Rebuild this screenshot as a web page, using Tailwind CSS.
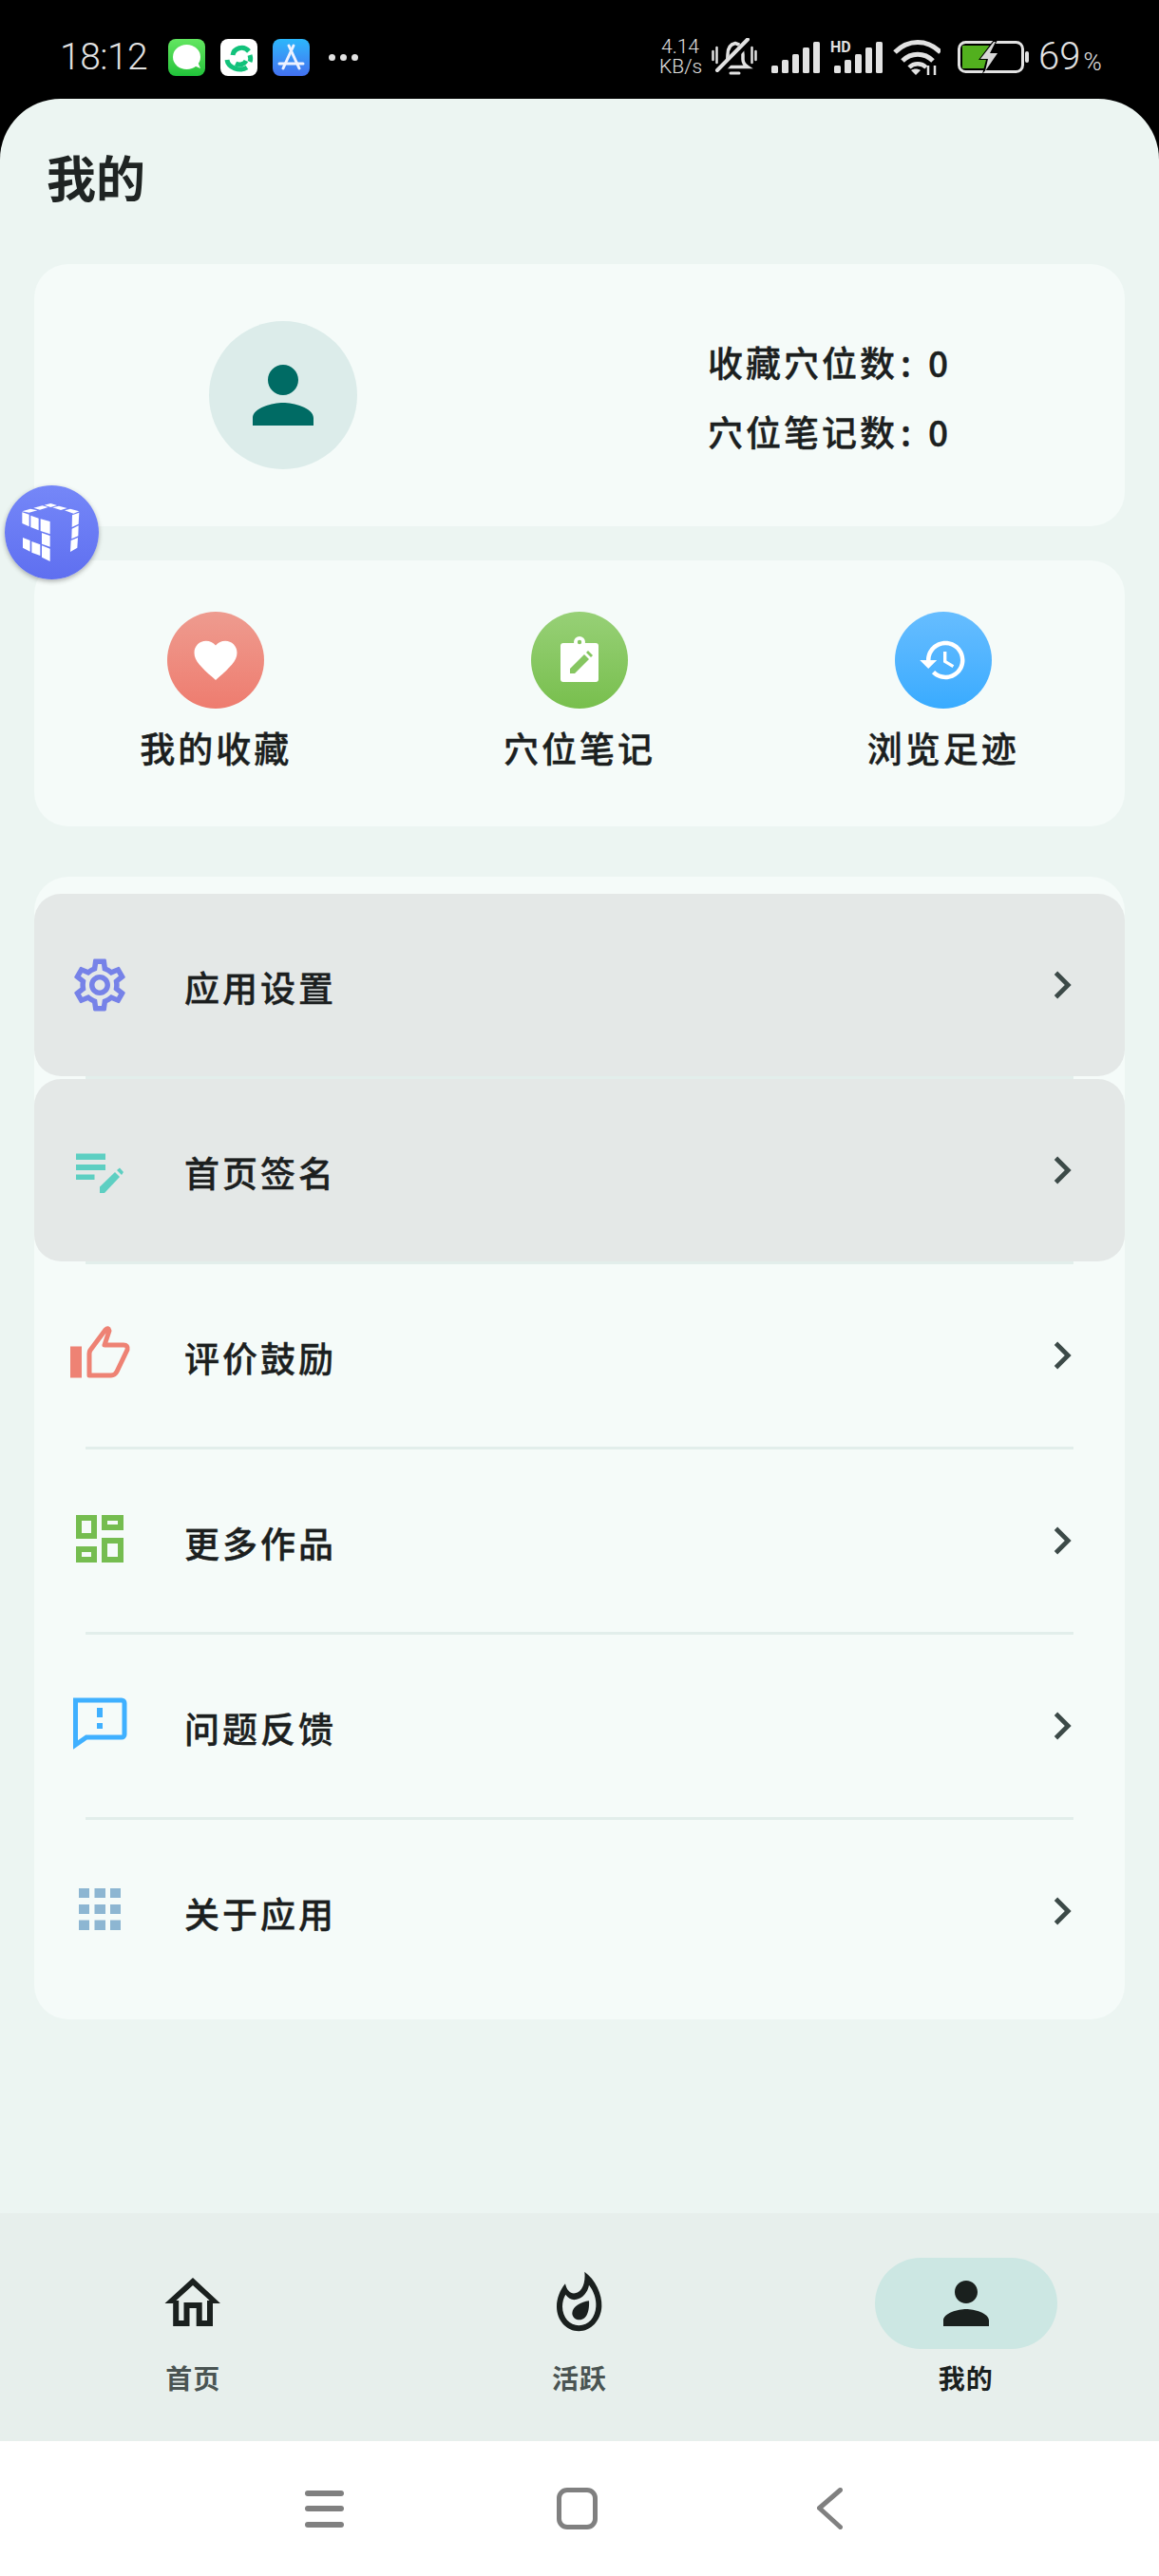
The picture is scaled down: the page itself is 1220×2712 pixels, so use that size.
<!DOCTYPE html>
<html lang="zh-CN">

<head>
  <meta charset="UTF-8">
  <meta name="viewport" content="width=device-width, initial-scale=1.0">
  <title>我的</title>
  <script src="https://cdn.jsdelivr.net/npm/@tailwindcss/browser@4"></script>
</head>

<body class="bg-black">
  <div class="relative w-[1220px] h-[2712px] flex flex-col bg-black overflow-hidden font-['Noto_Sans_CJK_SC',sans-serif] text-[#1c1f1f]">

    <!-- status bar -->
    <div class="h-[104px] shrink-0 flex items-center pt-[16px] pl-[63px] text-[#e2e2e2] font-['Roboto',sans-serif]">
      <span class="w-[114px] text-[39px] font-light leading-none tracking-[-0.5px]">18:12</span>
      <div class="w-[39px] h-[39px] rounded-[8px] bg-linear-to-b from-[#62e660] to-[#1ec33a] flex items-center justify-center">
        <svg width="39" height="39" viewBox="0 0 39 39"><ellipse cx="19.5" cy="19" rx="14.5" ry="13" fill="#fff"/><path d="M27 28l7 3-3-7z" fill="#fff"/></svg>
      </div>
      <div class="ml-[16px] w-[39px] h-[39px] rounded-[8px] bg-white">
        <svg width="39" height="39" viewBox="0 0 39 39" fill="none" stroke="#12c27b" stroke-width="5"><path d="M13 17C14 10 24 6 30 13"/><path d="M7 22C8 30 20 35 28 30"/><path d="M27 23c-2 4-7 5-11 3"/><path d="M31 17c1 3 1 5 0 7"/></svg>
      </div>
      <div class="ml-[16px] w-[39px] h-[39px] rounded-[8px] bg-linear-to-b from-[#2cb7fb] to-[#4270f0]">
        <svg width="39" height="39" viewBox="0 0 39 39" fill="none" stroke="#eef2ff" stroke-width="3" stroke-linecap="round"><path d="M17 7l11 24"/><path d="M22 7L11 31"/><path d="M7 26h25"/></svg>
      </div>
      <div class="ml-[20px] flex gap-[5px]">
        <span class="w-[7px] h-[7px] rounded-full bg-[#e2e2e2]"></span>
        <span class="w-[7px] h-[7px] rounded-full bg-[#e2e2e2]"></span>
        <span class="w-[7px] h-[7px] rounded-full bg-[#e2e2e2]"></span>
      </div>

      <div class="ml-[317px] w-[44px] flex flex-col text-[21px] font-light leading-[21px] text-center">
        <span>4.14</span>
        <span>KB/s</span>
      </div>
      <svg class="ml-[11px]" width="48" height="40" viewBox="0 0 48 40" fill="none" stroke="#e2e2e2">
        <path d="M12 30.500c4-3 5-6 5-13 0-7 3-11 8-12 5 1 8 5 8 12v5c0 3 2 6 5 8z" stroke-width="3.500"/>
        <path d="M20 37h9" stroke-width="3" stroke-linecap="round"/>
        <path d="M1.500 14v9M5.500 10v16M42.500 10v16M46.500 14v9" stroke-width="2.500" stroke-linecap="round"/>
        <path d="M8 36L40 1.500" stroke="#000" stroke-width="8"/>
        <path d="M6 34L38 1.500" stroke-width="4" stroke-linecap="round"/>
      </svg>
      <svg class="ml-[15px]" width="51" height="33" viewBox="0 0 51 33" fill="#e2e2e2">
        <rect x="0" y="25" width="7" height="8" rx="1.500"/><rect x="11" y="19" width="7" height="14" rx="1.500"/><rect x="22" y="13" width="7" height="20" rx="1.500"/><rect x="33" y="6" width="7" height="27" rx="1.500"/><rect x="44" y="0" width="7" height="33" rx="1.500"/>
      </svg>
      <div class="ml-[11px] relative w-[55px] h-[33px]">
        <svg class="absolute left-[4px] top-0" width="51" height="33" viewBox="0 0 51 33" fill="#e2e2e2">
          <rect x="0" y="25" width="7" height="8" rx="1.500"/><rect x="11" y="19" width="7" height="14" rx="1.500"/><rect x="22" y="13" width="7" height="20" rx="1.500"/><rect x="33" y="6" width="7" height="27" rx="1.500"/><rect x="44" y="0" width="7" height="33" rx="1.500"/>
        </svg>
        <span class="absolute left-0 top-[-1px] text-[16px] leading-[14px] font-bold">HD</span>
      </div>
      <svg class="ml-[11px]" width="50" height="38" viewBox="0 0 50 38" fill="none" stroke="#e2e2e2" stroke-width="5">
        <path d="M2 14c14-14 34-14 48 0"/>
        <path d="M10 23c9-9 23-9 32 0"/>
        <path d="M17 30c5-5 13-5 18 0" stroke-width="4.500"/>
        <path d="M24 38l-5-5c3-2 7-2 10 0z" fill="#e2e2e2" stroke="none"/>
        <path d="M37 28v10M44 28v10" stroke-width="2.500"/>
      </svg>
      <svg class="ml-[18px]" width="76" height="34" viewBox="0 0 76 34">
        <rect x="1.500" y="1.500" width="67" height="31" rx="7" fill="none" stroke="#e2e2e2" stroke-width="3"/>
        <rect x="71" y="11" width="4" height="12" rx="2" fill="#e2e2e2"/>
        <path d="M5 5h32l-9 24H5z" fill="#52b01e"/>
        <path d="M38 -1L22 20h8l-4 15 18-22h-9l7-14z" fill="#000"/>
        <path d="M38 1L24 19h8l-3 13 13-19h-8l6-12z" fill="#d8d8d8"/>
      </svg>
      <span class="ml-[9px] text-[40px] font-light leading-none">69</span>
      <span class="ml-[3px] mt-[9px] text-[26px] font-light leading-none">%</span>
    </div>

    <!-- page -->
    <div class="flex-1 flex flex-col rounded-t-[64px] bg-[#ecf5f2]">
      <div class="h-[174px] shrink-0 flex items-center pl-[49px] pb-[10px]">
        <h1 class="text-[52px] font-bold leading-none text-[#1f2423]">我的</h1>
      </div>

      <!-- profile card -->
      <div class="mx-[36px] h-[276px] flex items-center pl-[184px] rounded-[36px] bg-[#f5fbf9]">
        <div class="w-[156px] h-[156px] rounded-full bg-[#dcecea] flex items-center justify-center">
          <svg width="96" height="96" viewBox="0 0 24 24" fill="#006b64"><path d="M12 12c2.210 0 4-1.790 4-4s-1.790-4-4-4-4 1.790-4 4 1.790 4 4 4zm0 2c-2.670 0-8 1.340-8 4v2h16v-2c0-2.660-5.330-4-8-4z"/></svg>
        </div>
        <div class="ml-[369px] mt-[3px] flex flex-col text-[37px] font-medium [-webkit-text-stroke:0.4px_#1c1f1f] leading-[73px] tracking-[3px]">
          <span>收藏穴位数<span class="inline-block w-[32px] pl-[3px]">:</span>0</span>
          <span>穴位笔记数<span class="inline-block w-[32px] pl-[3px]">:</span>0</span>
        </div>
      </div>

      <!-- shortcuts -->
      <div class="mx-[36px] mt-[36px] h-[280px] grid grid-cols-3 pt-[54px] rounded-[36px] bg-[#f5fbf9]">
        <div class="flex flex-col items-center">
          <div class="w-[102px] h-[102px] rounded-full bg-linear-to-b from-[#ee9b8f] to-[#ee7c6f] flex items-center justify-center">
            <svg width="54" height="54" viewBox="0 0 24 24" fill="#fff"><path d="M12 21.350l-1.450-1.320C5.400 15.360 2 12.280 2 8.500 2 5.420 4.420 3 7.500 3c1.740 0 3.410.81 4.500 2.090C13.090 3.810 14.760 3 16.500 3 19.580 3 22 5.420 22 8.500c0 3.780-3.400 6.860-8.550 11.540L12 21.350z"/></svg>
          </div>
          <span class="mt-[17px] text-[37px] font-medium [-webkit-text-stroke:0.4px_#1c1f1f] leading-[48px] tracking-[3px]">我的收藏</span>
        </div>
        <div class="flex flex-col items-center">
          <div class="w-[102px] h-[102px] rounded-full bg-linear-to-b from-[#97d076] to-[#78bf4d] flex items-center justify-center">
            <svg width="54" height="54" viewBox="0 0 54 54">
              <rect x="7" y="9" width="40" height="41" rx="3" fill="#fff"/>
              <circle cx="27" cy="8" r="6" fill="#fff"/>
              <circle cx="27" cy="8" r="2.200" fill="#86c661"/>
              <path d="M17 41v-5l15-15 5 5-15 15z" fill="#86c661"/>
              <path d="M34 19l2-2 5 5-2 2z" fill="#86c661"/>
            </svg>
          </div>
          <span class="mt-[17px] text-[37px] font-medium [-webkit-text-stroke:0.4px_#1c1f1f] leading-[48px] tracking-[3px]">穴位笔记</span>
        </div>
        <div class="flex flex-col items-center">
          <div class="w-[102px] h-[102px] rounded-full bg-linear-to-b from-[#66bdff] to-[#38abff] flex items-center justify-center">
            <svg width="54" height="54" viewBox="0 0 24 24" fill="#fff"><path d="M13 3c-4.970 0-9 4.030-9 9H1l3.890 3.890.07.140L9 12H6c0-3.870 3.130-7 7-7s7 3.130 7 7-3.130 7-7 7c-1.930 0-3.680-.790-4.940-2.060l-1.420 1.420C8.270 19.990 10.510 21 13 21c4.970 0 9-4.030 9-9s-4.030-9-9-9zm-1 5v5l4.280 2.540.720-1.210-3.500-2.080V8H12z"/></svg>
          </div>
          <span class="mt-[17px] text-[37px] font-medium [-webkit-text-stroke:0.4px_#1c1f1f] leading-[48px] tracking-[3px]">浏览足迹</span>
        </div>
      </div>

      <!-- menu -->
      <div class="mx-[36px] mt-[53px] h-[1203px] pt-[18px] rounded-[36px] bg-[#f5fbf9]">
        <div class="h-[192px] flex items-center pl-[36px] pr-[37px] rounded-[28px] bg-[#e4e8e7]">
          <svg width="66" height="66" viewBox="0 0 24 24" fill="#7682e8"><path d="M19.430 12.980c.040-.320.070-.640.070-.980 0-.340-.030-.660-.070-.980l2.110-1.650c.190-.150.240-.420.120-.640l-2-3.460c-.090-.160-.260-.250-.440-.250-.060 0-.120.010-.170.030l-2.490 1c-.520-.400-1.080-.730-1.690-.980l-.380-2.650C14.460 2.180 14.250 2 14 2h-4c-.250 0-.460.180-.490.420l-.380 2.650c-.610.250-1.170.590-1.690.980l-2.490-1c-.060-.020-.120-.030-.180-.030-.170 0-.340.090-.430.250l-2 3.460c-.130.220-.070.490.120.640l2.110 1.650c-.040.320-.070.650-.07.980 0 .330.030.660.070.980l-2.110 1.650c-.190.150-.240.420-.12.640l2 3.460c.090.160.260.250.44.250.060 0 .120-.010.170-.030l2.490-1c.520.400 1.080.730 1.690.98l.38 2.650c.03.24.24.42.49.42h4c.25 0 .46-.18.49-.42l.38-2.65c.61-.25 1.170-.59 1.69-.98l2.49 1c.06.02.12.03.18.03.17 0 .34-.09.43-.25l2-3.46c.12-.22.07-.49-.12-.64l-2.11-1.65zm-1.98-1.71c.04.31.05.52.05.73 0 .21-.02.43-.05.73l-.14 1.13.89.7 1.08.84-.7 1.21-1.27-.51-1.04-.42-.9.68c-.43.32-.84.56-1.25.73l-1.06.43-.16 1.13-.2 1.35h-1.4l-.19-1.35-.16-1.13-1.06-.43c-.43-.18-.83-.41-1.23-.71l-.91-.7-1.06.43-1.27.51-.7-1.21 1.08-.84.89-.7-.14-1.13c-.03-.31-.05-.54-.05-.74s.02-.43.05-.73l.14-1.13-.89-.7-1.08-.84.7-1.21 1.27.51 1.04.42.9-.68c.43-.32.84-.56 1.25-.73l1.06-.43.16-1.13.2-1.35h1.39l.19 1.35.16 1.13 1.06.43c.43.18.83.41 1.23.71l.91.7 1.06-.43 1.27-.51.7 1.21-1.07.85-.89.7.14 1.13zM12 8c-2.21 0-4 1.79-4 4s1.79 4 4 4 4-1.79 4-4-1.79-4-4-4zm0 6c-1.1 0-2-.9-2-2s.9-2 2-2 2 .9 2 2-.9 2-2 2z"/></svg>
          <span class="ml-[56px] mt-[4px] flex-1 text-[37px] font-medium [-webkit-text-stroke:0.4px_#1c1f1f] leading-[48px] tracking-[3px]">应用设置</span>
          <svg width="58" height="58" viewBox="0 0 24 24" fill="#3c4a48"><path d="M10 6L8.590 7.410 13.170 12l-4.580 4.590L10 18l6-6z"/></svg>
        </div>
        <div class="mx-[54px] h-[3px] bg-[#e2eeeb]"></div>
        <div class="h-[192px] flex items-center pl-[36px] pr-[37px] rounded-[28px] bg-[#e4e8e7]">
          <svg width="66" height="66" viewBox="0 0 66 66" fill="#5dcfc2">
            <rect x="8" y="15.500" width="31" height="6.500"/><rect x="8" y="27" width="31" height="6"/><rect x="8" y="37.500" width="19.500" height="5.500"/>
            <path d="M33 50.500l16-15.500 5 5-16 17h-5z"/><path d="M51 33l3-2.500 4 4.500-2 3z"/>
          </svg>
          <span class="ml-[56px] mt-[4px] flex-1 text-[37px] font-medium [-webkit-text-stroke:0.4px_#1c1f1f] leading-[48px] tracking-[3px]">首页签名</span>
          <svg width="58" height="58" viewBox="0 0 24 24" fill="#3c4a48"><path d="M10 6L8.590 7.410 13.170 12l-4.580 4.590L10 18l6-6z"/></svg>
        </div>
        <div class="mx-[54px] h-[3px] bg-[#e2eeeb]"></div>
        <div class="h-[192px] flex items-center pl-[36px] pr-[37px]">
          <svg width="66" height="66" viewBox="0 0 66 66">
            <rect x="2" y="23.500" width="12" height="33" fill="#ee8274"/>
            <path d="M22 54V31q0-2 1-3.500L39 6q3-3 4 1l-5 15h20q5 0 4 5L51 50q-2 4-6 4z" fill="none" stroke="#ee8274" stroke-width="5" stroke-linejoin="round"/>
          </svg>
          <span class="ml-[56px] mt-[4px] flex-1 text-[37px] font-medium [-webkit-text-stroke:0.4px_#1c1f1f] leading-[48px] tracking-[3px]">评价鼓励</span>
          <svg width="58" height="58" viewBox="0 0 24 24" fill="#3c4a48"><path d="M10 6L8.590 7.410 13.170 12l-4.580 4.590L10 18l6-6z"/></svg>
        </div>
        <div class="mx-[54px] h-[3px] bg-[#e2eeeb]"></div>
        <div class="h-[192px] flex items-center pl-[36px] pr-[37px]">
          <svg width="66" height="66" viewBox="0 0 66 66" fill="none" stroke="#75bd50" stroke-width="6">
            <rect x="11" y="9" width="16" height="19"/><rect x="38" y="9" width="17" height="10"/>
            <rect x="11" y="42" width="16" height="11"/><rect x="38" y="33" width="17" height="20"/>
          </svg>
          <span class="ml-[56px] mt-[4px] flex-1 text-[37px] font-medium [-webkit-text-stroke:0.4px_#1c1f1f] leading-[48px] tracking-[3px]">更多作品</span>
          <svg width="58" height="58" viewBox="0 0 24 24" fill="#3c4a48"><path d="M10 6L8.590 7.410 13.170 12l-4.580 4.590L10 18l6-6z"/></svg>
        </div>
        <div class="mx-[54px] h-[3px] bg-[#e2eeeb]"></div>
        <div class="h-[192px] flex items-center pl-[36px] pr-[37px]">
          <svg width="66" height="66" viewBox="0 0 66 66">
            <path d="M7.500 6H56a3 3 0 0 1 3 3v33a3 3 0 0 1-3 3H19L7.500 53z" fill="none" stroke="#3fb0ff" stroke-width="5"/>
            <rect x="30" y="14" width="6" height="10" fill="#3fb0ff"/><rect x="30" y="30" width="6" height="6" fill="#3fb0ff"/>
          </svg>
          <span class="ml-[56px] mt-[4px] flex-1 text-[37px] font-medium [-webkit-text-stroke:0.4px_#1c1f1f] leading-[48px] tracking-[3px]">问题反馈</span>
          <svg width="58" height="58" viewBox="0 0 24 24" fill="#3c4a48"><path d="M10 6L8.590 7.410 13.170 12l-4.580 4.590L10 18l6-6z"/></svg>
        </div>
        <div class="mx-[54px] h-[3px] bg-[#e2eeeb]"></div>
        <div class="h-[192px] flex items-center pl-[36px] pr-[37px]">
          <svg width="66" height="66" viewBox="0 0 66 66" fill="#8db6d2">
            <rect x="11" y="9" width="11" height="10"/><rect x="27.500" y="9" width="11.500" height="10"/><rect x="44" y="9" width="11" height="10"/>
            <rect x="11" y="26" width="11" height="10"/><rect x="27.500" y="26" width="11.500" height="10"/><rect x="44" y="26" width="11" height="10"/>
            <rect x="11" y="42.500" width="11" height="10.500"/><rect x="27.500" y="42.500" width="11.500" height="10.500"/><rect x="44" y="42.500" width="11" height="10.500"/>
          </svg>
          <span class="ml-[56px] mt-[4px] flex-1 text-[37px] font-medium [-webkit-text-stroke:0.4px_#1c1f1f] leading-[48px] tracking-[3px]">关于应用</span>
          <svg width="58" height="58" viewBox="0 0 24 24" fill="#3c4a48"><path d="M10 6L8.590 7.410 13.170 12l-4.580 4.590L10 18l6-6z"/></svg>
        </div>
      </div>
    </div>

    <!-- bottom nav -->
    <div class="h-[240px] shrink-0 grid grid-cols-3 pt-[47px] bg-[#e7efec]">
      <div class="flex flex-col items-center">
        <div class="w-[192px] h-[96px] rounded-full flex items-center justify-center">
          <svg width="72" height="72" viewBox="0 0 72 72">
            <path d="M36 9l29 27h-8L36 17 15 36H6.500z" fill="#1a201e"/>
            <path d="M18.200 33v24h11.300V38h13.200v19H54V33" fill="none" stroke="#1a201e" stroke-width="6"/>
          </svg>
        </div>
        <span class="mt-[14px] text-[28px] font-bold leading-[32px] tracking-[1px] text-[#4a5452]">首页</span>
      </div>
      <div class="flex flex-col items-center">
        <div class="w-[192px] h-[96px] rounded-full flex items-center justify-center">
          <svg width="80" height="80" viewBox="0 0 240 240" fill="#1a201e" fill-rule="evenodd">
            <path d="M75 58C80 80 92 90 106 88 128 84 140 55 136 20 170 45 192 90 190 130 188 175 155 208 118 208 80 208 48 175 48 130 48 105 58 78 75 58ZM76 92C84 104 96 110 108 108 130 104 146 85 150 62 165 80 174 108 172 130 170 165 148 190 118 190 90 190 66 165 66 130 66 116 70 102 76 92Z"/>
            <path d="M150 112C152 140 145 172 120 172 105 172 96 160 97 150 98 130 125 115 150 112Z"/>
          </svg>
        </div>
        <span class="mt-[14px] text-[28px] font-bold leading-[32px] tracking-[1px] text-[#4a5452]">活跃</span>
      </div>
      <div class="flex flex-col items-center">
        <div class="w-[192px] h-[96px] rounded-full bg-[#cce7e3] flex items-center justify-center">
          <svg width="72" height="72" viewBox="0 0 24 24" fill="#1a201e"><path d="M12 12c2.210 0 4-1.790 4-4s-1.790-4-4-4-4 1.790-4 4 1.790 4 4 4zm0 2c-2.670 0-8 1.340-8 4v2h16v-2c0-2.660-5.330-4-8-4z"/></svg>
        </div>
        <span class="mt-[14px] text-[28px] font-bold leading-[32px] tracking-[1px] text-[#1a201e]">我的</span>
      </div>
    </div>

    <!-- gesture bar -->
    <div class="h-[142px] shrink-0 flex items-center pl-[321px] bg-white">
      <div class="w-[41px] flex flex-col gap-[10.500px]">
        <span class="h-[6px] rounded-full bg-[#808080]"></span>
        <span class="h-[6px] rounded-full bg-[#808080]"></span>
        <span class="h-[6px] rounded-full bg-[#808080]"></span>
      </div>
      <div class="ml-[224px] w-[43px] h-[44px] rounded-[11px] border-[5px] border-[#808080]"></div>
      <svg class="ml-[231px]" width="27" height="44" viewBox="0 0 27 44" fill="none" stroke="#808080" stroke-width="5" stroke-linecap="round" stroke-linejoin="round"><path d="M24.500 2.500L2.500 21.500l22 20"/></svg>
    </div>

    <!-- floating ball -->
    <div class="absolute left-[5px] top-[511px] w-[99px] h-[99px] rounded-full bg-linear-to-b from-[#7587f8] to-[#5f6ff0] shadow-[0_2px_5px_rgba(0,0,0,0.3)]">
      <svg class="w-full h-full" viewBox="15 18 297 297" fill="#fff">
        <path d="M70 100l26-8 22 5-26 7zM106 89l28-7 18 5-26 8zM140 80l20-5 20 6-20 6zM166 88l20-5 26 7-20 6zM204 97l18-5 28 8-18 7z"/>
        <path d="M70 103l22 7v38l-22-10zM97 113l25 9v38l-25-10zM128 124l30 8v40l-30-10zM132 168l26 9v35l-26-9zM72 183l23 9v35l-23-12zM100 195l27 10v35l-27-10zM132 208l26 10v40l-26-13z"/>
        <path d="M228 112l22-8-2 36-21 10zM227 155l21-10-1 33-21 9zM224 192l22-9-2 32-22 13z"/>
      </svg>
    </div>
  </div>
</body>

</html>
